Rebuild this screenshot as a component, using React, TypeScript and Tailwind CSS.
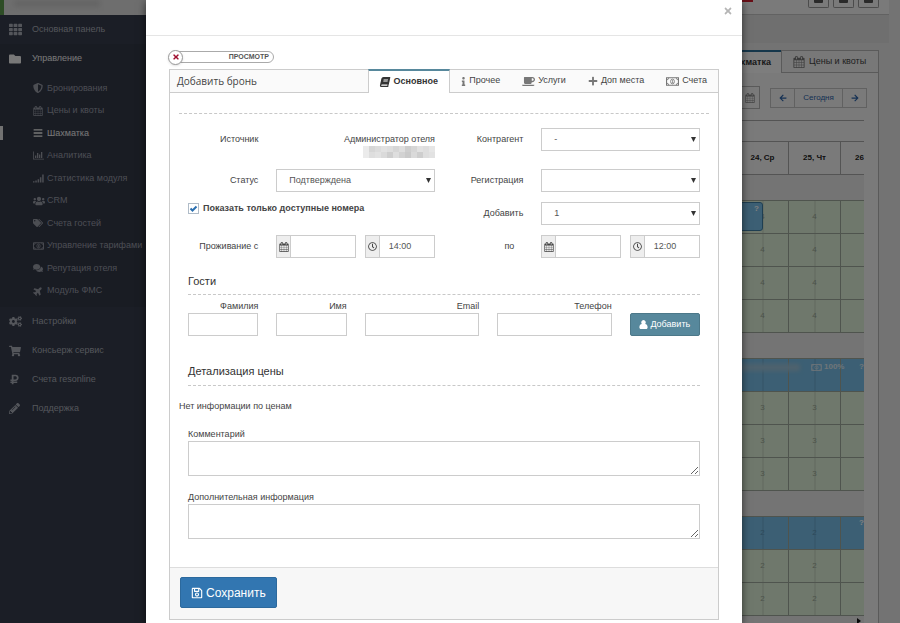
import type { ReactNode } from "react";
import {
  FaArrowLeft,
  FaArrowRight,
  FaBars,
  FaBook,
  FaCoffee,
  FaCogs,
  FaComments,
  FaFolder,
  FaInfo,
  FaPencilAlt,
  FaPlane,
  FaPlus,
  FaRegClock,
  FaRegSave,
  FaRubleSign,
  FaShieldAlt,
  FaShoppingCart,
  FaTags,
  FaTh,
  FaTimes,
  FaUsers,
} from "react-icons/fa";

function CalendarIcon({ className }: { className?: string }) {
  return (
    <svg viewBox="0 0 1792 1792" fill="currentColor" className={className} aria-hidden="true">
      <path d="M192 1664h288v-288h-288v288zm352 0h320v-288h-320v288zm-352-352h288v-320h-288v320zm352 0h320v-320h-320v320zm-352-384h288v-288h-288v288zm736 736h320v-288h-320v288zm-384-736h320v-288h-320v288zm768 736h288v-288h-288v288zm-384-352h320v-320h-320v320zm-352-864v-288q0-13-9.5-22.5t-22.5-9.5h-64q-13 0-22.5 9.5t-9.5 22.5v288q0 13 9.5 22.5t22.5 9.5h64q13 0 22.5-9.5t9.5-22.5zm736 864h288v-320h-288v320zm-384-384h320v-288h-320v288zm384 0h288v-288h-288v288zm32-480v-288q0-13-9.5-22.5t-22.5-9.5h-64q-13 0-22.5 9.5t-9.5 22.5v288q0 13 9.5 22.5t22.5 9.5h64q13 0 22.5-9.5t9.5-22.5zm384-64v1280q0 52-38 90t-90 38h-1408q-52 0-90-38t-38-90v-1280q0-52 38-90t90-38h128v-96q0-66 47-113t113-47h64q66 0 113 47t47 113v96h384v-96q0-66 47-113t113-47h64q66 0 113 47t47 113v96h128q52 0 90 38t38 90z" />
    </svg>
  );
}

function MoneyIcon({ className }: { className?: string }) {
  return (
    <svg viewBox="0 0 24 16" fill="none" stroke="currentColor" strokeWidth="2" className={className} aria-hidden="true">
      <path d="M1 1h22v14H1z" />
      <path d="M1 5a4 4 0 0 0 4-4M19 1a4 4 0 0 0 4 4M23 11a4 4 0 0 0-4 4M5 15a4 4 0 0 0-4-4" strokeWidth="1.5" />
      <ellipse cx="12" cy="8" rx="3.6" ry="4.4" strokeWidth="1.5" />
      <path d="M11 6.5l1.2-.8v4.6M10.7 10.4h3" strokeWidth="1.4" />
    </svg>
  );
}

function BarChartIcon({ className }: { className?: string }) {
  return (
    <svg viewBox="0 0 22 18" fill="currentColor" className={className} aria-hidden="true">
      <path d="M0 1h1.6v14.4H22V17H0zM4 9h2.6v5H4zM8 4h2.6v10H8zM12 7h2.6v7H12zM16 2h2.6v12H16z" />
    </svg>
  );
}

function SignalIcon({ className }: { className?: string }) {
  return (
    <svg viewBox="0 0 22 18" fill="currentColor" className={className} aria-hidden="true">
      <path d="M0 14.5h3V17H0zM4.6 13h3v4h-3zM9.2 10.5h3V17h-3zM13.8 6.5h3V17h-3zM18.4 1h3v16h-3z" />
    </svg>
  );
}

// head and shoulders without a gap between them
function PersonIcon({ className }: { className?: string }) {
  return (
    <svg viewBox="0 0 18 18" fill="currentColor" className={className} aria-hidden="true">
      <path d="M9 0a4.6 4.8 0 0 1 3.2 8.2c3.3.4 5 3 5 6.8 0 1.8-1.2 3-3 3H3.8c-1.8 0-3-1.2-3-3 0-3.8 1.7-6.4 5-6.8A4.6 4.8 0 0 1 9 0z" />
    </svg>
  );
}

const SUB_MENU = [
  { label: "Бронирования", icon: <FaShieldAlt /> },
  { label: "Цены и квоты", icon: <CalendarIcon className="size-[10px]" /> },
  { label: "Шахматка", icon: <FaBars />, active: true },
  { label: "Аналитика", icon: <BarChartIcon className="h-[9px] w-[11px]" /> },
  { label: "Статистика модуля", icon: <SignalIcon className="h-[9px] w-[11px]" /> },
  { label: "CRM", icon: <FaUsers className="size-[12px]" /> },
  { label: "Счета гостей", icon: <FaTags /> },
  { label: "Управление тарифами", icon: <MoneyIcon className="h-[8px] w-[11px]" /> },
  { label: "Репутация отеля", icon: <FaComments /> },
  { label: "Модуль ФМС", icon: <FaPlane className="-rotate-45" /> },
];

const BOTTOM_MENU = [
  { label: "Настройки", icon: <FaCogs /> },
  { label: "Консьерж сервис", icon: <FaShoppingCart className="size-[12px]" /> },
  { label: "Счета resonline", icon: <FaRubleSign className="size-[11px]" /> },
  { label: "Поддержка", icon: <FaPencilAlt className="size-[11px]" /> },
];

const TABS = [
  { label: "Прочее", icon: <FaInfo className="h-[9px] w-[5px]" /> },
  { label: "Услуги", icon: <FaCoffee className="size-[13px]" /> },
  { label: "Доп места", icon: <FaPlus className="size-[10px]" /> },
  { label: "Счета", icon: <MoneyIcon className="h-[9px] w-[13px]" /> },
];

// grey levels of the masked account name
const MASK = [
  [235, 214, 220, 226, 222, 214, 222, 206, 214, 226, 222, 230],
  [235, 222, 226, 218, 206, 222, 210, 202, 218, 206, 222, 226],
];

function MenuLink({ icon, label, active }: { icon: ReactNode; label: string; active?: boolean }) {
  return (
    <a
      href="#"
      className={`flex h-[29px] items-center pl-[9px] ${active ? "text-[#f0f0f0]" : "text-[#a8acb6]"}`}
    >
      <span className="flex w-[23px] text-[13px]">{icon}</span>
      {label}
    </a>
  );
}

function Sidebar() {
  return (
    <aside className="w-[146px] shrink-0 overflow-hidden bg-[#363c4c] text-[9px] whitespace-nowrap">
      <div className="flex h-[15px] border-l-4 border-[#5c9a4c] bg-[#dcdcdc]">
        <div className="ml-[10px] h-[7px] w-[86px] bg-[#cacaca] blur-[2px]" />
      </div>
      <nav>
        <MenuLink icon={<FaTh />} label="Основная панель" />
        <div className="bg-[#333847] pb-[5px]">
          <MenuLink icon={<FaFolder className="size-[12px]" />} label="Управление" active />
          <ul className="mt-[4px] grid h-[225px]">
            {SUB_MENU.map((item) => (
              <li key={item.label} className="flex items-center">
                <span className={`h-[14px] w-[3px] ${item.active ? "bg-[#e4e4e4]" : ""}`} />
                <a
                  href="#"
                  className={`flex items-center pl-[30px] ${item.active ? "text-[#f0f0f0]" : "text-[#989ca7]"}`}
                >
                  <span className="flex w-[14px] text-[10px]">{item.icon}</span>
                  {item.label}
                </a>
              </li>
            ))}
          </ul>
        </div>
        {BOTTOM_MENU.map((item) => (
          <MenuLink key={item.label} {...item} />
        ))}
      </nav>
    </aside>
  );
}

// thin line that marks noon inside a day cell
const DAY_CELL =
  "border border-[#9fa99c] bg-[linear-gradient(90deg,transparent_49%,rgba(0,0,0,0.12)_49%,rgba(0,0,0,0.12)_51%,transparent_51%)] text-center";

function GridRow({ value, booked }: { value: string; booked?: boolean }) {
  return (
    <tr className={`h-[33px] ${booked ? "bg-[#78bfe8] text-[#5b93b5]" : "bg-[#dff0d8] text-[#98a694]"}`}>
      <td className="border border-[#9fa99c]" />
      <td className={DAY_CELL}>{value}</td>
      <td className={DAY_CELL}>{value}</td>
      <td className="border border-[#9fa99c]" />
    </tr>
  );
}

function GapRow() {
  return (
    <tr className="h-[26px] bg-[#e8e8e8]">
      <td colSpan={4} />
    </tr>
  );
}

function TopButton({ label }: { label: string }) {
  return (
    <button className="flex h-[8px] w-[21px] justify-center rounded-b-[2px] border border-t-0 border-[#999]" aria-label={label}>
      <span className="h-[3px] w-[9px] rounded-b-[1px] bg-[#555]" />
    </button>
  );
}

function Chessboard() {
  return (
    <main className="flex-1 min-w-0 bg-[#e6e6e6]">
      <div className="mr-[11px] flex h-[15px] items-start justify-end gap-[4px] border-b border-[#c4c4c4] bg-[#f4f4f4] pr-[10px]">
        <span className="mr-[51px] h-[2px] w-[14px] bg-[#d01c2c]" />
        <TopButton label="Почта" />
        <TopButton label="Уведомления" />
        <TopButton label="Профиль" />
      </div>
      <div className="mr-[11px] h-[28px] bg-[#dedede]" />
      <div className="mr-[21px] mt-[7px] flex h-[23px] justify-end text-[9px]">
        <div className="flex w-[120px] items-center justify-end border-t-2 border-[#2d6f97] bg-[#fafafa] pr-[10px] font-bold text-[#333]">
          Шахматка
        </div>
        <div className="flex w-[98px] items-center gap-[4px] border border-[#b5b5b5] bg-[#f0f0f0] pl-[11px] text-[#444]">
          <CalendarIcon className="size-[12px] text-[#777]" />
          Цены и квоты
        </div>
      </div>
      <div className="mr-[21px] border-r border-[#b5b5b5] bg-[#f5f5f5] pt-[13px] pr-[14px]">
        <div className="flex justify-end text-[#2b62a8]">
          <div className="mr-[10px] flex h-[23px] w-[40px] items-center justify-end border border-[#b5b5b5] pr-[4px] text-[#888]">
            <CalendarIcon className="size-[10px]" />
          </div>
          <div className="-mr-[3px] mt-[2px] flex h-[20px] divide-x divide-[#c2c2c2] border border-[#c2c2c2] text-[9px]">
            <button className="flex w-[24px] items-center justify-center" aria-label="Назад">
              <FaArrowLeft className="size-[8px]" />
            </button>
            <button className="w-[48px] text-[8px]">Сегодня</button>
            <button className="flex w-[23px] items-center justify-center" aria-label="Вперёд">
              <FaArrowRight className="size-[8px]" />
            </button>
          </div>
        </div>
        <div className="relative mt-[11px] overflow-hidden">
          <table className="w-[calc(100%+29px)] table-fixed border-collapse text-[8px]">
            <colgroup>
              <col />
              <col className="w-[52px]" />
              <col className="w-[52px]" />
              <col className="w-[52px]" />
            </colgroup>
            <thead className="text-[#222]">
              <tr className="h-[21px]">
                <th colSpan={4} className="border border-[#a8a8a8]" />
              </tr>
              <tr className="h-[33px]">
                <th className="border border-[#a8a8a8]" />
                <th className="border border-[#a8a8a8]">24, Ср</th>
                <th className="border border-[#a8a8a8]">25, Чт</th>
                <th className="border border-[#a8a8a8] pl-[14px] text-left">26</th>
              </tr>
            </thead>
            <tbody>
              <GapRow />
              <GridRow value="4" />
              <GridRow value="4" />
              <GridRow value="4" />
              <GridRow value="4" />
              <GapRow />
              <GridRow value="" booked />
              <GridRow value="3" />
              <GridRow value="3" />
              <GridRow value="3" />
              <GapRow />
              <GridRow value="2" booked />
              <GridRow value="2" />
              <GridRow value="2" />
            </tbody>
          </table>
          <div className="absolute right-[101px] top-[82px] h-[29px] w-[80px] rounded-[3px] border border-[#3f7ea5] bg-[#78bfe8] pr-[3px] text-right text-[8px] leading-[12px] font-bold text-white">
            ?
          </div>
          <div className="absolute right-0 top-[241px] flex w-[124px] items-center text-[8px] font-bold text-[#dfeaf2]">
            <span className="h-[7px] w-[60px] bg-[#9fc4da] blur-[2px]" />
            <MoneyIcon className="ml-[11px] mr-[2px] h-[7px] w-[11px]" />
            100%
            <span className="ml-auto">?</span>
          </div>
          <span className="absolute right-0 top-[397px] text-[8px] font-bold text-white">?</span>
        </div>
        <div className="flex h-[20px] items-start justify-end bg-[#e8e8e8] pt-[2px] pr-[3px] text-[#111]">
          <svg viewBox="0 0 4 6" className="h-[6px] w-[4px]" fill="currentColor" aria-hidden="true">
            <path d="M0 0l4 3-4 3z" />
          </svg>
        </div>
      </div>
    </main>
  );
}

function Label({ htmlFor, children, className = "col-span-2" }: { htmlFor?: string; children: ReactNode; className?: string }) {
  return (
    <label htmlFor={htmlFor} className={`flex h-[23px] items-center justify-end ${className}`}>
      {children}
    </label>
  );
}

function Select({ id, value }: { id: string; value: string }) {
  return (
    <div className="relative col-span-4">
      <select
        id={id}
        defaultValue={value}
        className="block h-[23px] w-full appearance-none border border-[#ccc] bg-white pl-[12px] text-[#555] outline-none"
      >
        <option value={value}>{value}</option>
      </select>
      <svg
        viewBox="0 0 6 6"
        className="pointer-events-none absolute right-[4px] top-[9px] size-[5px]"
        fill="#333"
        aria-hidden="true"
      >
        <path d="M0 0h6L3 6z" />
      </svg>
    </div>
  );
}

function IconInput({ icon, label, value, className }: { icon: ReactNode; label: string; value?: string; className?: string }) {
  return (
    <div className={`col-span-2 flex h-[23px] border border-[#ccc] ${className ?? ""}`}>
      <span className="flex w-[14px] shrink-0 items-center justify-center border-r border-[#ccc] bg-[#eee] text-[#444]">
        {icon}
      </span>
      <input aria-label={label} defaultValue={value} className="w-full min-w-0 pl-[9px] text-[#555] outline-none" />
    </div>
  );
}

function Period({ from, time }: { from: string; time: string }) {
  return (
    <>
      <IconInput icon={<CalendarIcon className="size-[10px]" />} label={from} className="-mr-[9px]" />
      <IconInput icon={<FaRegClock className="size-[9px]" />} label="Время" value={time} />
    </>
  );
}

function GuestField({ id, label, className }: { id: string; label: string; className: string }) {
  return (
    <div className={className}>
      <label htmlFor={id} className="block text-right leading-[14px]">
        {label}
      </label>
      <input id={id} className="block h-[23px] w-full border border-[#ccc] px-[6px] outline-none" />
    </div>
  );
}

function BookingForm() {
  return (
    <div className="px-[9px] pt-[20px] pb-[28px] text-[9px] text-[#444]">
      <div className="border-t border-dashed border-[#c8c8c8]" />
      <div className="px-[9px]">
        <div className="mt-[14px] grid grid-cols-12 gap-x-[18px]">
          <Label>Источник</Label>
          <div className="col-span-4 h-[41px] pt-[4px] text-right leading-[14px]">
            Администратор отеля
            <svg viewBox="0 0 72 12" className="ml-auto h-[12px] w-[72px]" aria-hidden="true">
              {MASK.map((row, y) =>
                row.map((g, x) => (
                  <rect key={`${x}-${y}`} x={x * 6} y={y * 6} width="6" height="6" fill={`rgb(${g},${g},${g})`} />
                )),
              )}
            </svg>
          </div>
          <Label htmlFor="agent">Контрагент</Label>
          <Select id="agent" value="-" />
        </div>
        <div className="grid grid-cols-12 gap-x-[18px] gap-y-[10px]">
          <Label htmlFor="status">Статус</Label>
          <Select id="status" value="Подтверждена" />
          <Label htmlFor="registration">Регистрация</Label>
          <Select id="registration" value="" />

          <label className="col-span-6 flex h-[13px] items-center gap-[4px] font-bold">
            <span className="relative flex">
              <input
                type="checkbox"
                defaultChecked
                className="peer size-[11px] appearance-none border border-[#b0bcc8] bg-white"
              />
              <svg
                viewBox="0 0 11 11"
                className="pointer-events-none absolute inset-0 hidden size-[11px] peer-checked:block"
                fill="none"
                stroke="#2a6fb0"
                strokeWidth="2"
                aria-hidden="true"
              >
                <path d="M2.5 5.5l2 2 4-4" />
              </svg>
            </span>
            Показать только доступные номера
          </label>
          <Label htmlFor="add-count">Добавить</Label>
          <Select id="add-count" value="1" />

          <Label>Проживание с</Label>
          <Period from="Дата заезда" time="14:00" />
          <Label className="col-span-2 pr-[9px]">по</Label>
          <Period from="Дата выезда" time="12:00" />
        </div>

        <h2 className="mt-[14px] border-b border-dashed border-[#c8c8c8] pb-[4px] text-[11px] leading-[18px] text-[#333]">
          Гости
        </h2>
        <div className="mt-[4px] grid grid-cols-12 items-end gap-x-[18px]">
          <GuestField id="surname" label="Фамилия" className="col-span-2" />
          <GuestField id="name" label="Имя" className="col-span-2" />
          <GuestField id="email" label="Email" className="col-span-3" />
          <GuestField id="phone" label="Телефон" className="col-span-3" />
          <button className="col-span-2 flex h-[23px] items-center justify-center gap-[2px] rounded-[2px] border border-[#4c7889] bg-[#57889c] whitespace-nowrap text-white">
            <PersonIcon className="size-[9px]" />
            Добавить
          </button>
        </div>

        <h2 className="mt-[25px] border-b border-dashed border-[#c8c8c8] pb-[4px] text-[11px] leading-[20px] text-[#333]">
          Детализация цены
        </h2>
      </div>
      <p className="mt-[13px] leading-[14px]">Нет информации по ценам</p>
      <div className="mt-[14px] px-[9px]">
        <label htmlFor="comment" className="block leading-[14px]">
          Комментарий
        </label>
        <textarea id="comment" className="block h-[35px] w-full resize border border-[#ccc] outline-none" />
        <label htmlFor="extra" className="mt-[14px] block leading-[14px]">
          Дополнительная информация
        </label>
        <textarea id="extra" className="block h-[35px] w-full resize border border-[#ccc] outline-none" />
      </div>
    </div>
  );
}

function BookingDialog() {
  return (
    <div role="dialog" aria-label="Добавить бронь" className="w-[596px] max-w-full bg-white pb-[20px] shadow-[0_2px_8px_rgba(0,0,0,0.6)]">
      <div className="flex h-[36px] items-start justify-end border-b border-[#e5e5e5] pt-[6px] pr-[9px]">
        <button aria-label="Закрыть" className="text-[#b5b5b5]">
          <FaTimes className="size-[10px]" />
        </button>
      </div>
      <div className="px-[23px] pt-[15px]">
        <button className="relative flex h-[12px] w-[105px] items-center justify-end rounded-full border border-[#aaa] bg-white pr-[4px] text-[7px] font-bold text-[#555]">
          <span className="absolute -left-[2px] flex size-[15px] items-center justify-center rounded-full border border-[#999] bg-white text-[#a01030] shadow">
            <FaTimes className="size-[8px]" />
          </span>
          ПРОСМОТР
        </button>
        <section className="mt-[6px] border border-[#ccc]">
          <header className="flex h-[23px] bg-[#fafafa] text-[9px] text-[#444]">
            <h1 className="flex flex-1 items-center border-b border-[#ccc] pl-[7px] font-['Open_Sans',sans-serif] text-[10px]">
              Добавить бронь
            </h1>
            <div role="tablist" className="flex">
              <button
                role="tab"
                aria-selected="true"
                className="-mt-px flex w-[82px] items-center justify-center gap-[3px] border-x border-t-2 border-x-[#ccc] border-t-[#57889c] bg-white font-bold text-[#333]"
              >
                <FaBook className="size-[10px] -skew-x-12" />
                Основное
              </button>
              {TABS.map((tab) => (
                <button
                  key={tab.label}
                  role="tab"
                  aria-selected="false"
                  className="flex items-center gap-[3px] border-b border-[#ccc] px-[11px]"
                >
                  <span className="text-[#777]">{tab.icon}</span>
                  {tab.label}
                </button>
              ))}
            </div>
          </header>
          <BookingForm />
          <footer className="border-t border-[#ddd] bg-[#f7f7f7] px-[10px] pt-[9px] pb-[11px]">
            <button className="flex h-[31px] items-center gap-[3px] rounded-[2px] border border-[#2c699d] bg-[#3276b1] px-[10px] text-[12px] text-white">
              <FaRegSave className="size-[12px]" />
              Сохранить
            </button>
          </footer>
        </section>
      </div>
    </div>
  );
}

export default function App() {
  return (
    <div className="relative flex h-screen overflow-hidden bg-[#e6e6e6] font-['Liberation_Sans',Arial,sans-serif]">
      <Sidebar />
      <Chessboard />
      <div className="absolute inset-0 flex justify-center bg-black/50 pr-[12px]">
        <BookingDialog />
      </div>
    </div>
  );
}
